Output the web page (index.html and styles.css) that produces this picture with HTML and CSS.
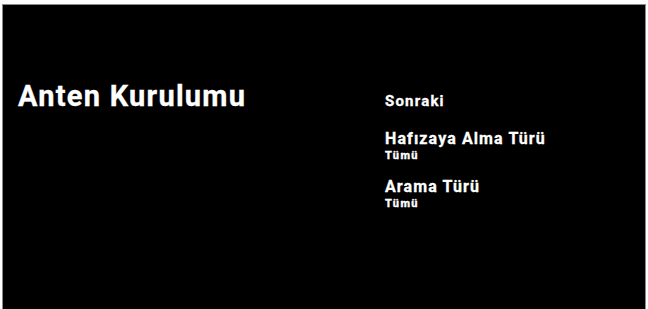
FILE: index.html
```html
<!DOCTYPE html>
<html lang="tr">
<head>
<meta charset="utf-8">
<link rel="stylesheet" href="styles.css">
</head>
<body>
<div class="screen">
  <div class="left">
    <h1 class="title">Anten Kurulumu</h1>
  </div>
  <div class="menu">
    <div class="item single">Sonraki</div>
    <div class="item">
      <div class="label">Hafızaya Alma Türü</div>
      <div class="value">Tümü</div>
    </div>
    <div class="item">
      <div class="label">Arama Türü</div>
      <div class="value">Tümü</div>
    </div>
  </div>
</div>
</body>
</html>
```
FILE: styles.css
```css
html, body {
  margin: 0;
  padding: 0;
  background: #ffffff;
}
body {
  width: 648px;
  height: 309px;
  padding: 4px 2px 0 2px;
  box-sizing: border-box;
}
.screen {
  height: 305px;
  background: #000;
  border: 1px solid #8a8a8a;
  border-bottom: none;
  box-sizing: border-box;
  display: flex;
  color: #fff;
  font-family: Roboto, "Liberation Sans", sans-serif;
  font-weight: 700;
  -webkit-text-stroke: 0.3px #fff;
}
.left {
  width: 382px;
  padding: 74px 0 0 15px;
  box-sizing: border-box;
}
.title {
  margin: 0;
  font-size: 29px;
  line-height: 34px;
  font-weight: 700;
  letter-spacing: 1.25px;
}
.menu {
  padding-top: 87px;
  display: flex;
  flex-direction: column;
  gap: 16px;
}
.item.single {
  font-size: 15px;
  line-height: 18px;
  letter-spacing: 1.2px;
  margin-bottom: 4px;
}
.label {
  font-size: 16px;
  line-height: 18px;
  letter-spacing: 1.1px;
}
.value {
  margin-top: 2px;
  font-size: 11px;
  line-height: 12px;
  letter-spacing: 1.4px;
  -webkit-text-stroke: 0.4px #fff;
}
```
